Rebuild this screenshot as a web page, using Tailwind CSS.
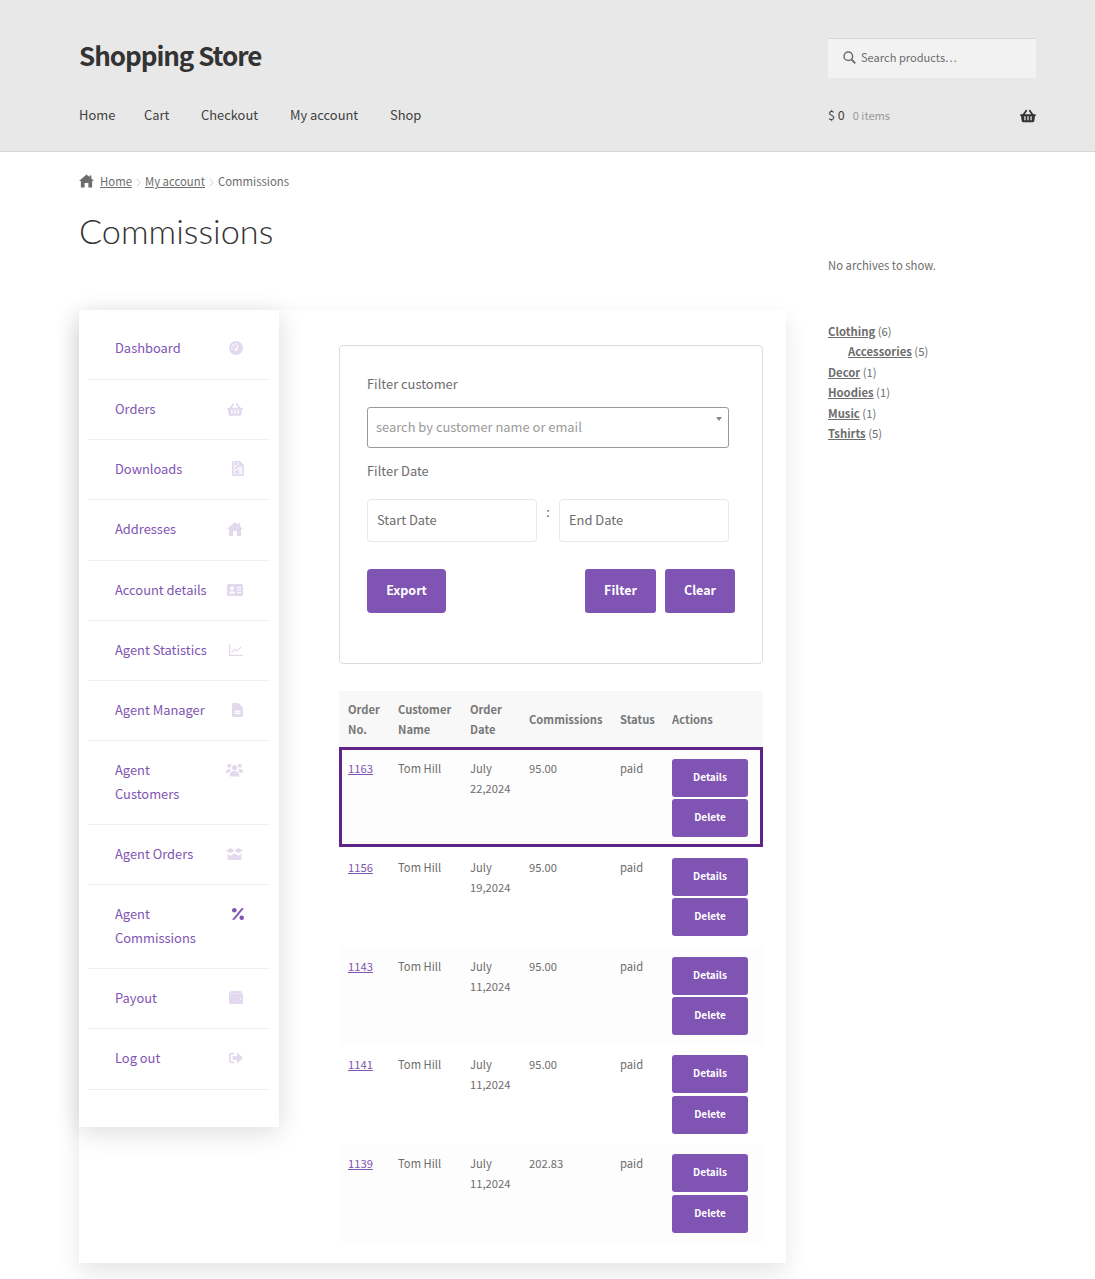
<!DOCTYPE html>
<html lang="en">
<head>
  <meta charset="UTF-8" />
  <title>Commissions - Shopping Store</title>
  <script src="https://cdn.jsdelivr.net/npm/@tailwindcss/browser@4"></script>
</head>
<body class="bg-white text-[#6d6d6d] font-['Noto_Sans_CJK_SC','Source_Sans_Pro','Open_Sans',sans-serif] text-[13px]">

  <!-- header -->
  <header class="bg-[#e8e8e8] border-b border-[#d6d6d6] h-[152px] pl-[79px] pr-[59px] pt-[38px]">
    <div class="flex justify-between items-start h-[40px]">
      <a class="text-[26px] font-bold leading-[34px] tracking-[-1.050px] text-[#333333]">Shopping Store</a>
      <div class="w-[208px] h-[40px] bg-[#f2f2f2] border-t border-[#d8d8d8] flex items-center pl-[15px] pb-[2px] gap-[5px] text-[11.100px] text-[#6d6d6d]">
        <svg class="w-[13px] h-[13px]" viewBox="0 0 13 13" fill="none" stroke="#6d6d6d" stroke-width="1.500"><circle cx="5.300" cy="5.300" r="4.300"/><path d="M8.500 8.500l3.800 3.800" stroke-width="1.900"/></svg>
        <span>Search products…</span>
      </div>
    </div>
    <div class="flex justify-between items-center mt-[25px] h-[24px]">
      <nav class="flex text-[12.900px] text-[#404040]">
        <a class="w-[65px]">Home</a>
        <a class="w-[57px]">Cart</a>
        <a class="w-[89px]">Checkout</a>
        <a class="w-[100px]">My account</a>
        <a>Shop</a>
      </nav>
      <div class="w-[208px] flex items-center">
        <span class="text-[12.500px] text-[#404040]">$ 0</span>
        <span class="ml-[8px] text-[11.100px] text-[#9a9a9a]">0 items</span>
        <svg class="ml-auto w-[16px] h-[14px] mt-[2px]" viewBox="0 0 576 512" fill="#333333"><path d="M576 216v16c0 13.255-10.745 24-24 24h-8l-26.113 182.788C514.509 462.435 494.257 480 470.37 480H105.63c-23.887 0-44.139-17.565-47.518-41.212L32 256h-8c-13.255 0-24-10.745-24-24v-16c0-13.255 10.745-24 24-24h67.341l106.78-146.821c10.395-14.292 30.407-17.453 44.701-7.058 14.293 10.395 17.453 30.408 7.058 44.701L170.477 192h235.046L326.12 82.821c-10.395-14.292-7.234-34.306 7.059-44.701 14.291-10.395 34.306-7.235 44.701 7.058L484.659 192H552c13.255 0 24 10.745 24 24zM312 392V280c0-13.255-10.745-24-24-24s-24 10.745-24 24v112c0 13.255 10.745 24 24 24s24-10.745 24-24zm112 0V280c0-13.255-10.745-24-24-24s-24 10.745-24 24v112c0 13.255 10.745 24 24 24s24-10.745 24-24zm-224 0V280c0-13.255-10.745-24-24-24s-24 10.745-24 24v112c0 13.255 10.745 24 24 24s24-10.745 24-24z"/></svg>
      </div>
    </div>
  </header>

  <div class="flex pl-[79px] pr-[59px] pb-[16px]">
    <!-- main column -->
    <main class="w-[707px] shrink-0">
      <div class="flex items-center h-[20px] mt-[20px] text-[11.350px]">
        <svg class="w-[15px] h-[14px] mr-[6px] -mt-[2px]" viewBox="0 0 16 14" fill="#6d6d6d"><path d="M8 0l3.200 2.700V1h2v3.400L16 7h-2v7h-4V9H6v5H2V7H0z"/></svg>
        <a class="underline">Home</a>
        <svg class="w-[5px] h-[9px] mx-[4px]" viewBox="0 0 5 9" fill="none" stroke="#d0d0d0"><path d="M.7.7l3.500 3.800-3.500 3.800"/></svg>
        <a class="underline">My account</a>
        <svg class="w-[5px] h-[9px] mx-[4px]" viewBox="0 0 5 9" fill="none" stroke="#d0d0d0"><path d="M.7.7l3.500 3.800-3.500 3.800"/></svg>
        <span>Commissions</span>
      </div>
      <h1 class="mt-[16px] text-[34.300px] leading-[46px] font-light font-['Lato',sans-serif] text-[#333333]">Commissions</h1>

      <div class="mt-[56px] flex h-[953px] shadow-[0_10px_22px_rgba(0,0,0,0.1)]">
        <!-- account menu -->
        <aside class="w-[200px] h-[817px] px-[9px] pt-[9px] shadow-[0_5px_25px_rgba(0,0,0,0.14)] text-[#7f54b3] text-[12.900px] leading-[24px] shrink-0">
          <ul>
            <li class="flex justify-between px-[27px] py-[17px] h-[61px] border-b border-[#f0f0f0]"><a>Dashboard</a>
              <svg class="w-[14px] h-[14px] mt-[5px]" viewBox="0 0 16 16"><circle cx="8" cy="8" r="8" fill="#e3d9ef"/><circle cx="8" cy="10" r="1.700" fill="#fff"/><path d="M8 10l2.800-5" stroke="#fff" stroke-width="1.300"/><circle cx="3.300" cy="8.500" r="1.100" fill="#fff"/><circle cx="5" cy="4.800" r="1.100" fill="#fff"/><circle cx="8.400" cy="3.200" r="1.100" fill="#fff"/></svg></li>
            <li class="flex justify-between px-[27px] py-[16.600px] h-[60px] border-b border-[#f0f0f0]"><a>Orders</a>
              <svg class="w-[16px] h-[15px] mt-[5px]" viewBox="0 0 576 512" fill="#e3d9ef"><path d="M576 216v16c0 13.255-10.745 24-24 24h-8l-26.113 182.788C514.509 462.435 494.257 480 470.37 480H105.630c-23.887 0-44.139-17.565-47.518-41.212L32 256h-8c-13.255 0-24-10.745-24-24v-16c0-13.255 10.745-24 24-24h67.341l106.780-146.821c10.395-14.292 30.407-17.453 44.701-7.058 14.293 10.395 17.453 30.408 7.058 44.701L170.477 192h235.046L326.120 82.821c-10.395-14.292-7.234-34.306 7.059-44.701 14.291-10.395 34.306-7.235 44.701 7.058L484.659 192H552c13.255 0 24 10.745 24 24zM312 392V280c0-13.255-10.745-24-24-24s-24 10.745-24 24v112c0 13.255 10.745 24 24 24s24-10.745 24-24zm112 0V280c0-13.255-10.745-24-24-24s-24 10.745-24 24v112c0 13.255 10.745 24 24 24s24-10.745 24-24zm-224 0V280c0-13.255-10.745-24-24-24s-24 10.745-24 24v112c0 13.255 10.745 24 24 24s24-10.745 24-24z"/></svg></li>
            <li class="flex justify-between pl-[27px] pr-[26px] py-[16.600px] h-[60px] border-b border-[#f0f0f0]"><a>Downloads</a>
              <svg class="w-[12px] h-[15px] mt-[4px]" viewBox="0 0 12 15"><path d="M1.500 0H8l4 4v9.500a1.500 1.500 0 0 1-1.500 1.500h-9A1.500 1.500 0 0 1 0 13.500V1.500A1.500 1.500 0 0 1 1.500 0z" fill="#e3d9ef"/><path d="M1.500 1.500h5.500v4h3.500v8h-9z" fill="#f6f2fa"/><path d="M3 2h2v2H3zM5 4h2v2H5zM3 6h2v2H3z" fill="#e3d9ef"/><circle cx="5" cy="11" r="1.900" fill="#e3d9ef"/></svg></li>
            <li class="flex justify-between px-[27px] py-[16.600px] h-[61px] border-b border-[#f0f0f0]"><a>Addresses</a>
              <svg class="w-[16px] h-[14px] mt-[5px]" viewBox="0 0 16 14" fill="#e3d9ef"><path d="M8 0l3.200 2.700V1h2v3.400L16 7h-2v7h-4V9H6v5H2V7H0z"/></svg></li>
            <li class="flex justify-between px-[27px] py-[16.600px] h-[60px] border-b border-[#f0f0f0]"><a>Account details</a>
              <svg class="w-[16px] h-[12px] mt-[6px]" viewBox="0 0 16 12"><rect width="16" height="12" rx="1.500" fill="#e3d9ef"/><circle cx="5" cy="4.400" r="1.800" fill="#fff"/><path d="M2 9.500c0-3 6-3 6 0z" fill="#fff"/><path d="M10 3.500h4.200M10 6h4.200M10 8.500h4.200" stroke="#fff" stroke-width="1"/></svg></li>
            <li class="flex justify-between px-[27px] py-[16.600px] h-[60px] border-b border-[#f0f0f0]"><a>Agent Statistics</a>
              <svg class="w-[14px] h-[12px] mt-[6px]" viewBox="0 0 15 13" fill="none" stroke="#e3d9ef"><path d="M.7 0v12.300H15" stroke-width="1.400"/><path d="M2.800 9l3-3.300 2.500 2L13 3" stroke-width="1.200"/></svg></li>
            <li class="flex justify-between px-[27px] py-[16.600px] h-[60px] border-b border-[#f0f0f0]"><a>Agent Manager</a>
              <svg class="w-[11px] h-[14px] mt-[5px]" viewBox="0 0 11 14"><path d="M1 0h5.500L11 4.500V13a1 1 0 0 1-1 1H1a1 1 0 0 1-1-1V1a1 1 0 0 1 1-1z" fill="#e3d9ef"/><path d="M2.800 7.500h5.400v3.600H2.800z" fill="#fff"/><path d="M2.800 9.300h5.400" stroke="#e3d9ef" stroke-width=".8"/></svg></li>
            <li class="flex justify-between px-[27px] py-[17px] h-[84px] border-b border-[#f0f0f0]"><a class="w-[100px]">Agent Customers</a>
              <svg class="w-[17px] h-[14px] mt-[5px]" viewBox="0 0 18 14" fill="#e3d9ef"><circle cx="3.500" cy="2.500" r="2.200"/><circle cx="14.500" cy="2.500" r="2.200"/><circle cx="9" cy="4.500" r="2.700"/><path d="M0 9c0-3 2.500-3.500 4.600-3l.4 1-1.500 3H1a1 1 0 0 1-1-1zM18 9c0-3-2.500-3.500-4.600-3l-.4 1 1.500 3H17a1 1 0 0 0 1-1zM4 13c0-4.500 3-5 5-5s5 .5 5 5a1 1 0 0 1-1 1H5a1 1 0 0 1-1-1z"/></svg></li>
            <li class="flex justify-between px-[27px] py-[16.600px] h-[60px] border-b border-[#f0f0f0]"><a>Agent Orders</a>
              <svg class="w-[17px] h-[12px] mt-[6px]" viewBox="0 0 17 12" fill="#e3d9ef"><path d="M0 2.500L4.500 0l4 2.500-4 2.800zM17 2.500L12.500 0l-4 2.500 4 2.800zM1.500 5.800l3 1.900 4-2.500 4 2.500 3-1.900V11a1 1 0 0 1-1 1h-12a1 1 0 0 1-1-1z"/></svg></li>
            <li class="flex justify-between pl-[27px] pr-[26px] py-[17px] h-[84px] border-b border-[#f0f0f0]"><a class="w-[100px]">Agent Commissions</a>
              <svg class="w-[12px] h-[12px] mt-[6px]" viewBox="0 0 12 12" fill="#7f54b3"><circle cx="2.300" cy="2.300" r="2.300"/><circle cx="9.700" cy="9.700" r="2.300"/><path d="M9.500.2L12 .2 2.500 11.800H0z"/></svg></li>
            <li class="flex justify-between px-[27px] py-[16.600px] h-[60px] border-b border-[#f0f0f0]"><a>Payout</a>
              <svg class="w-[14px] h-[13px] mt-[5px]" viewBox="0 0 14 13"><path d="M1.500 0h10a1 1 0 0 1 1 1v1h-11z" fill="#e3d9ef"/><path d="M0 1.500C0 .8 1 1 1.500 2.200H13a1 1 0 0 1 1 1V12a1 1 0 0 1-1 1H1.500A1.500 1.500 0 0 1 0 11.500z" fill="#e3d9ef"/><circle cx="11.500" cy="7.700" r=".8" fill="#fff"/></svg></li>
            <li class="flex justify-between px-[27px] py-[16.600px] h-[61px] border-b border-[#f0f0f0]"><a>Log out</a>
              <svg class="w-[14px] h-[12px] mt-[6px]" viewBox="0 50 512 412" fill="#e3d9ef"><path d="M497 273L329 441c-15 15-41 4.500-41-17v-96H152c-13.300 0-24-10.700-24-24v-96c0-13.300 10.700-24 24-24h136V88c0-21.400 25.900-32 41-17l168 168c9.300 9.400 9.300 24.600 0 34zM192 436v-40c0-6.600-5.400-12-12-12H96c-17.700 0-32-14.300-32-32V160c0-17.700 14.300-32 32-32h84c6.600 0 12-5.400 12-12V76c0-6.600-5.400-12-12-12H96c-53 0-96 43-96 96v192c0 53 43 96 96 96h84c6.600 0 12-5.400 12-12z"/></svg></li>
          </ul>
        </aside>

        <section class="ml-[60px] w-[424px] pt-[35px]">
          <!-- filter box -->
          <div class="h-[319px] border border-[#dcdcdc] rounded-[4px] px-[27px] pt-[26px] text-[12.900px]">
            <p class="leading-[24px]">Filter customer</p>
            <div class="relative mt-[11px] w-[362px] h-[41px] border border-[#999999] rounded-[3px] pl-[8px] leading-[37px] text-[#9a9a9a]">search by customer name or email
              <span class="absolute right-[6px] top-[9px] border-x-[3.500px] border-x-transparent border-t-[4px] border-t-[#888888]"></span>
            </div>
            <p class="mt-[11px] leading-[24px]">Filter Date</p>
            <div class="flex mt-[16px] w-[362px]">
              <div class="w-[170px] h-[43px] border border-[#e8e8e8] rounded-[4px] pl-[9px] leading-[39px]">Start Date</div>
              <span class="w-[22px] text-center leading-[26px]">:</span>
              <div class="w-[170px] h-[43px] border border-[#e8e8e8] rounded-[4px] pl-[9px] leading-[39px]">End Date</div>
            </div>
            <div class="flex mt-[27px] w-[368px] font-bold text-white text-[12.500px]">
              <button class="w-[79px] h-[44px] pb-[2px] bg-[#7f54b3] rounded-[4px]">Export</button>
              <button class="ml-auto w-[71px] h-[44px] pb-[2px] bg-[#7f54b3] rounded-[3px]">Filter</button>
              <button class="ml-[9px] w-[70px] h-[44px] pb-[2px] bg-[#7f54b3] rounded-[3px]">Clear</button>
            </div>
          </div>

          <!-- commissions table -->
          <table class="mt-[27px] w-[424px] table-fixed text-[11.200px] leading-[20px]">
            <colgroup><col class="w-[50px]" /><col class="w-[72px]" /><col class="w-[59px]" /><col class="w-[91px]" /><col class="w-[52px]" /><col /></colgroup>
            <thead>
              <tr class="h-[56px] bg-[#f8f8f8]">
                <th class="pl-[9px] text-left font-bold text-[#777777]">Order No.</th>
                <th class="pl-[9px] text-left font-bold text-[#777777]">Customer Name</th>
                <th class="pl-[9px] text-left font-bold text-[#777777]">Order Date</th>
                <th class="pl-[9px] text-left font-bold text-[#777777]">Commissions</th>
                <th class="pl-[9px] text-left font-bold text-[#777777]">Status</th>
                <th class="pl-[9px] text-left font-bold text-[#777777]">Actions</th>
              </tr>
            </thead>
            <tbody>
              <tr class="h-[100px] bg-[#fdfdfd] outline-[3px] -outline-offset-[3px] outline-[#5f2487] align-top">
                <td class="pl-[9px] pt-[11px]"><a class="underline text-[#7f54b3]">1163</a></td>
                <td class="pl-[9px] pt-[11px]">Tom Hill</td>
                <td class="pl-[9px] pt-[11px]">July 22,2024</td>
                <td class="pl-[9px] pt-[11px]">95.00</td>
                <td class="pl-[9px] pt-[11px]">paid</td>
                <td class="pl-[9px] pt-[12px] text-[10px] font-bold text-white">
                  <button class="block w-[76px] h-[38px] pb-[2px] bg-[#7f54b3] rounded-[3px]">Details</button>
                  <button class="block w-[76px] h-[38px] pb-[2px] mt-[2px] bg-[#7f54b3] rounded-[3px]">Delete</button>
                </td>
              </tr>
              <tr class="h-[99px] align-top">
                <td class="pl-[9px] pt-[10px]"><a class="underline text-[#7f54b3]">1156</a></td>
                <td class="pl-[9px] pt-[10px]">Tom Hill</td>
                <td class="pl-[9px] pt-[10px]">July 19,2024</td>
                <td class="pl-[9px] pt-[10px]">95.00</td>
                <td class="pl-[9px] pt-[10px]">paid</td>
                <td class="pl-[9px] pt-[11px] text-[10px] font-bold text-white">
                  <button class="block w-[76px] h-[38px] pb-[2px] bg-[#7f54b3] rounded-[3px]">Details</button>
                  <button class="block w-[76px] h-[38px] pb-[2px] mt-[2px] bg-[#7f54b3] rounded-[3px]">Delete</button>
                </td>
              </tr>
              <tr class="h-[99px] bg-[#fdfdfd] align-top">
                <td class="pl-[9px] pt-[10px]"><a class="underline text-[#7f54b3]">1143</a></td>
                <td class="pl-[9px] pt-[10px]">Tom Hill</td>
                <td class="pl-[9px] pt-[10px]">July 11,2024</td>
                <td class="pl-[9px] pt-[10px]">95.00</td>
                <td class="pl-[9px] pt-[10px]">paid</td>
                <td class="pl-[9px] pt-[11px] text-[10px] font-bold text-white">
                  <button class="block w-[76px] h-[38px] pb-[2px] bg-[#7f54b3] rounded-[3px]">Details</button>
                  <button class="block w-[76px] h-[38px] pb-[2px] mt-[2px] bg-[#7f54b3] rounded-[3px]">Delete</button>
                </td>
              </tr>
              <tr class="h-[99px] align-top">
                <td class="pl-[9px] pt-[9px]"><a class="underline text-[#7f54b3]">1141</a></td>
                <td class="pl-[9px] pt-[9px]">Tom Hill</td>
                <td class="pl-[9px] pt-[9px]">July 11,2024</td>
                <td class="pl-[9px] pt-[9px]">95.00</td>
                <td class="pl-[9px] pt-[9px]">paid</td>
                <td class="pl-[9px] pt-[10px] text-[10px] font-bold text-white">
                  <button class="block w-[76px] h-[38px] pb-[2px] bg-[#7f54b3] rounded-[3px]">Details</button>
                  <button class="block w-[76px] h-[38px] pb-[2px] mt-[3px] bg-[#7f54b3] rounded-[3px]">Delete</button>
                </td>
              </tr>
              <tr class="h-[99px] bg-[#fdfdfd] align-top">
                <td class="pl-[9px] pt-[9px]"><a class="underline text-[#7f54b3]">1139</a></td>
                <td class="pl-[9px] pt-[9px]">Tom Hill</td>
                <td class="pl-[9px] pt-[9px]">July 11,2024</td>
                <td class="pl-[9px] pt-[9px]">202.83</td>
                <td class="pl-[9px] pt-[9px]">paid</td>
                <td class="pl-[9px] pt-[10px] text-[10px] font-bold text-white">
                  <button class="block w-[76px] h-[38px] pb-[2px] bg-[#7f54b3] rounded-[3px]">Details</button>
                  <button class="block w-[76px] h-[38px] pb-[2px] mt-[3px] bg-[#7f54b3] rounded-[3px]">Delete</button>
                </td>
              </tr>
            </tbody>
          </table>
        </section>
      </div>
    </main>

    <!-- right widgets -->
    <aside class="ml-[42px] w-[208px] pt-[102.600px] text-[11.300px] leading-[20.400px]">
      <p>No archives to show.</p>
      <ul class="mt-[46px]">
        <li><a class="font-bold underline">Clothing</a> (6)</li>
        <li class="pl-[20px]"><a class="font-bold underline">Accessories</a> (5)</li>
        <li><a class="font-bold underline">Decor</a> (1)</li>
        <li><a class="font-bold underline">Hoodies</a> (1)</li>
        <li><a class="font-bold underline">Music</a> (1)</li>
        <li><a class="font-bold underline">Tshirts</a> (5)</li>
      </ul>
    </aside>
  </div>
</body>
</html>
